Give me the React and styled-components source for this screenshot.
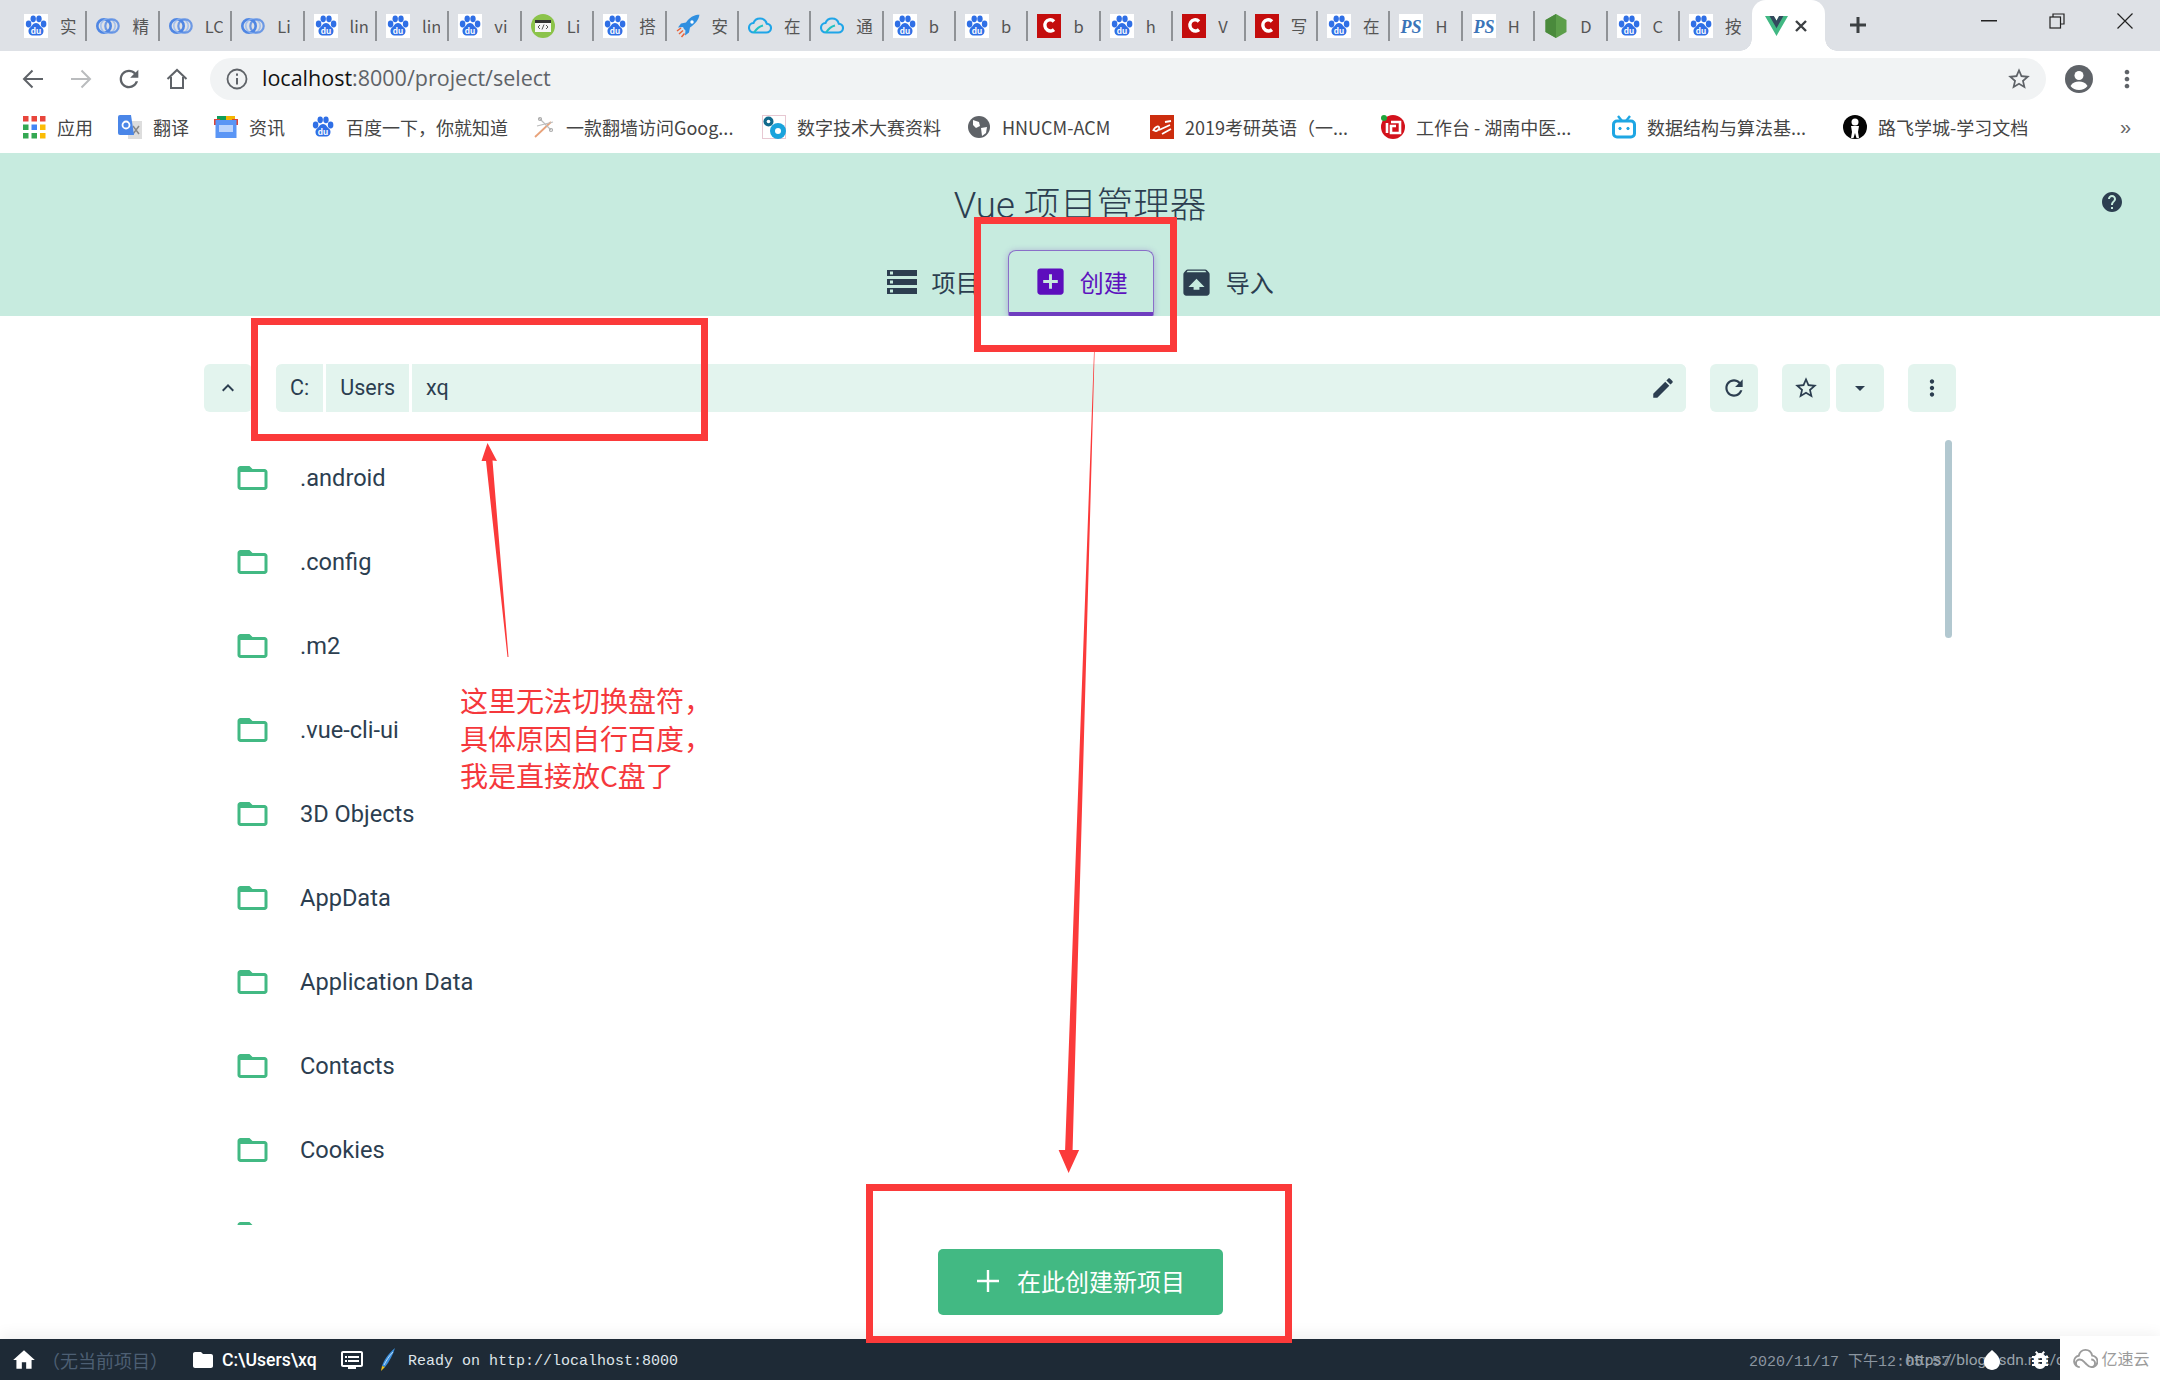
import React from 'react';
import styled, { createGlobalStyle } from 'styled-components';

const Global = createGlobalStyle`
  html, body { margin: 0; padding: 0; background: #fff; overflow: hidden; }
  * { box-sizing: border-box; }
  #root { width: 2160px; height: 1380px; }
`;

const CJK = `"Noto Sans CJK SC", sans-serif`;
const UI = `Roboto, "Noto Sans CJK SC", sans-serif`;

const Page = styled.div`
  position: relative; width: 2160px; height: 1380px; display: flex; flex-direction: column;
  font-family: ${UI}; color: #2c3e50; overflow: hidden;
`;

/* ---------- browser chrome ---------- */
const TabStrip = styled.div`
  height: 51px; background: #dee1e6; display: flex; align-items: stretch; padding-left: 15px; flex: none;
`;
const Tab = styled.div`
  width: 72.4px; flex: none; display: flex; align-items: center; padding-left: 9px; position: relative;
  &::after { content: ''; position: absolute; right: 0; top: 11px; height: 30px; width: 2px; background: ${p => p.$last ? 'transparent' : '#8f9296'}; }
`;
const TabLabel = styled.span`
  margin-left: 12px; width: 18px; overflow: hidden; white-space: nowrap; font: 16.5px ${CJK}; color: #555; line-height: 24px;
`;
const ActiveTab = styled.div`
  width: 73px; flex: none; background: #fff; border-radius: 14px 14px 0 0; display: flex; align-items: center;
  padding-left: 13px; gap: 6px; position: relative;
  &::before, &::after { content: ''; position: absolute; bottom: 0; width: 12px; height: 12px; }
  &::before { left: -12px; background: radial-gradient(circle at 0 0, #dee1e6 11.5px, #fff 12px); }
  &::after { right: -12px; background: radial-gradient(circle at 100% 0, #dee1e6 11.5px, #fff 12px); }
`;
const NewTab = styled.div`
  width: 34px; margin-left: 16px; display: flex; align-items: center; justify-content: center; padding-bottom: 1px;
`;
const WindowControls = styled.div`
  margin-left: auto; display: flex; align-items: flex-start; padding-right: 1px;
`;
const WinBtn = styled.div`
  width: 68px; height: 42px; display: flex; align-items: center; justify-content: center;
`;

const ToolBar = styled.div`
  height: 56px; flex: none; display: flex; align-items: center; background: #fff; padding: 0 0 0 9px;
`;
const NavIcon = styled.div`
  width: 48px; height: 42px; display: flex; align-items: center; justify-content: center; flex: none;
  margin-left: ${p => p.$ml || 0}px;
`;
const UrlPill = styled.div`
  width: 1836px; height: 42px; margin-left: 9px; border-radius: 21px; background: #f1f3f4; display: flex; align-items: center;
  padding: 0 14px 0 15px; flex: none;
`;
const UrlText = styled.div`
  margin-left: 13px; margin-top: -3px; font: 21.5px "Open Sans", sans-serif; color: #5f6368; white-space: nowrap; flex: 1;
  b { font-weight: 400; color: #111; }
`;
const RightTools = styled.div`
  display: flex; align-items: center; margin-left: 19px;
`;

const Bookmarks = styled.div`
  height: 46px; flex: none; background: #fff; display: flex; align-items: center; padding: 0 0 6px 22px; position: relative;
`;
const Bookmark = styled.div`
  display: flex; align-items: center; gap: 11px; margin-right: 26px; flex: none;
`;
const BookmarkText = styled.span`
  font: 18px/24px ${CJK}; color: #454545; white-space: nowrap; width: ${p => p.$w}px;
`;
const More = styled.span`
  margin-left: auto; margin-right: 29px; font: 20px "Liberation Sans", sans-serif; color: #666;
`;

/* ---------- vue ui ---------- */
const Header = styled.header`
  height: 163px; flex: none; background: #c7ebdf; display: flex; flex-direction: column; justify-content: space-between;
`;
const TitleRow = styled.div`
  display: grid; grid-template-columns: 1fr auto 1fr; align-items: center; padding: 27px 36px 0;
`;
const Title = styled.h1`
  grid-column: 2; margin: 0; font: 300 36.5px/52px ${UI}; color: #2c3e50;
`;
const HelpSlot = styled.div`
  grid-column: 3; justify-self: end; display: flex; margin-top: -9px;
`;
const NavTabs = styled.nav`
  display: flex; justify-content: center; height: 66px; padding-right: 2px;
`;
const NavTab = styled.div`
  display: flex; align-items: center; justify-content: center; gap: ${p => p.$gap || 11.5}px; width: ${p => p.$w || 146}px; height: 66px;
  font: 24px/32px ${CJK}; padding-bottom: ${p => p.$active ? 0 : 2}px; color: ${p => p.$active ? '#5d12be' : '#2c3e50'};
  ${p => p.$active && `
    border: 1.5px solid #8a6fc8; border-bottom: 4px solid #6f3ebf; border-radius: 8px 8px 2px 2px;
    box-shadow: 0 1px 6px rgba(110, 40, 190, .35);
  `}
`;

const Main = styled.main`
  flex: 1; min-height: 0; display: flex; flex-direction: column; background: #fff;
`;
const FolderBar = styled.div`
  margin: 48px 204px 0; height: 48px; display: flex; flex: none;
`;
const SquareBtn = styled.div`
  width: 48px; height: 48px; flex: none; border-radius: 6px; background: #e3f4ee; display: flex; align-items: center; justify-content: center;
  margin-left: ${p => p.$ml || 0}px;
`;
const PathBar = styled.div`
  flex: 1; margin-left: 24px; height: 48px; display: flex; border-radius: 6px; overflow: hidden; background: #e3f4ee; align-items: stretch; gap: 3px;
`;
const PathSeg = styled.div`
  display: flex; align-items: center; padding: 0 ${p => p.$px}px 1px; background: #e3f4ee; font: 21.5px ${UI}; color: #2c3e50; box-shadow: 3px 0 0 #fff;
`;
const PathRest = styled.div`
  flex: 1; display: flex; align-items: center; justify-content: space-between; padding: 0 10px 1px 14px; background: #e3f4ee; font: 21.5px ${UI}; color: #2c3e50;
`;

const List = styled.div`
  position: relative; margin-top: 24px; height: 789px; flex: none; overflow: hidden; padding: 0 204px;
`;
const Row = styled.div`
  height: 84px; display: flex; align-items: center; gap: 32px; padding-left: 33px;
  font: 23.6px ${UI}; color: #2c3e50;
`;
const ScrollThumb = styled.div`
  position: absolute; left: 1945px; top: 4px; width: 7px; height: 198px; border-radius: 4px; background: #b2c8d0;
`;

const ActionBar = styled.div`
  flex: 1; display: flex; align-items: center; justify-content: center;
`;
const CreateBtn = styled.div`
  width: 285px; height: 66px; border-radius: 5px; background: #42b983; color: #fff; display: flex; align-items: center; justify-content: center; gap: 18px;
  font: 24px ${CJK}; padding: 0 0 3px 2px;
`;

const StatusBar = styled.footer`
  height: 41px; flex: none; background: #1e2a36; display: flex; align-items: center; padding-left: 11px;
  box-shadow: 0 -6px 14px rgba(0,0,0,.05); position: relative;
`;
const NoProject = styled.span`
  margin-left: 5px; width: 149px; font: 18px ${CJK}; color: #4d5f73; white-space: nowrap;
`;
const CwdText = styled.span`
  margin-left: 7px; width: 118px; font: 500 17.6px ${UI}; color: #fff; white-space: nowrap;
`;
const LogText = styled.span`
  margin-left: 11px; padding-top: 3px; font: 15px "Liberation Mono", monospace; color: #dfe5ea; white-space: nowrap;
`;
const StatusRight = styled.div`
  margin-left: auto; width: 411px; flex: none; position: relative; height: 41px; display: flex; align-items: center;
`;
const Clock = styled.span`
  font: 15px "Liberation Mono", "Noto Sans CJK SC", monospace; color: #8b95a0; white-space: nowrap; width: 157px;
`;
const Watermark = styled.span`
  font: 15.5px ${UI}; color: #9aa3ab; white-space: nowrap;
`;
const StatusGlyph = styled.div`
  position: absolute; top: 9px; left: ${p => p.$x}px; display: flex;
`;
const Corner = styled.div`
  position: absolute; right: 0; bottom: 0; width: 100px; height: 44px; background: #fff; display: flex; align-items: center; justify-content: center; gap: 3px;
  font: 16px ${CJK}; color: #9b9b9b; padding-left: 3px;
`;

/* ---------- annotations over the page ---------- */
const RedBox = styled.div`
  position: absolute; border: 7px solid #fb3a3a; left: ${p => p.$x}px; top: ${p => p.$y}px; width: ${p => p.$w}px; height: ${p => p.$h}px; pointer-events: none;
`;
const Note = styled.div`
  position: absolute; left: 460px; top: 682px; font: 28px/37.5px ${CJK}; color: #f5383c; white-space: nowrap;
`;
const ArrowLayer = styled.svg`
  position: absolute; left: 0; top: 0; pointer-events: none;
`;

/* ---------- icons ---------- */
const Mi = ({ d, size = 24, color = '#2c3e50', vb = '0 0 24 24' }) => (
  <svg width={size} height={size} viewBox={vb} fill={color}><path d={d} /></svg>
);
const P = {
  edit: 'M3 17.25V21h3.75L17.81 9.94l-3.75-3.75L3 17.25zM20.71 7.04c.39-.39.39-1.02 0-1.41l-2.34-2.34c-.39-.39-1.02-.39-1.41 0l-1.83 1.83 3.75 3.75 1.83-1.83z',
  refresh: 'M17.65 6.35C16.2 4.9 14.21 4 12 4c-4.42 0-7.99 3.58-7.99 8s3.57 8 7.99 8c3.73 0 6.84-2.55 7.73-6h-2.08c-.82 2.33-3.04 4-5.65 4-3.31 0-6-2.69-6-6s2.69-6 6-6c1.66 0 3.14.69 4.22 1.78L13 11h7V4l-2.35 2.35z',
  star: 'M22 9.24l-7.19-.62L12 2 9.19 8.63 2 9.24l5.46 4.73L5.82 21 12 17.27 18.18 21l-1.63-7.03L22 9.24zM12 15.4l-3.76 2.27 1-4.28-3.32-2.88 4.38-.38L12 6.1l1.71 4.04 4.38.38-3.32 2.88 1 4.28L12 15.4z',
  dots: 'M12 8c1.1 0 2-.9 2-2s-.9-2-2-2-2 .9-2 2 .9 2 2 2zm0 2c-1.1 0-2 .9-2 2s.9 2 2 2 2-.9 2-2-.9-2-2-2zm0 6c-1.1 0-2 .9-2 2s.9 2 2 2 2-.9 2-2-.9-2-2-2z',
  caret: 'M7 10l5 5 5-5z',
  up: 'M7.41 15.41L12 10.83l4.59 4.58L18 14l-6-6-6 6z',
  help: 'M12 2C6.48 2 2 6.48 2 12s4.48 10 10 10 10-4.48 10-10S17.52 2 12 2zm1 17h-2v-2h2v2zm2.07-7.75l-.9.92C13.45 12.9 13 13.5 13 15h-2v-.5c0-1.1.45-2.1 1.17-2.83l1.24-1.26c.37-.36.59-.86.59-1.41 0-1.1-.9-2-2-2s-2 .9-2 2H8c0-2.21 1.79-4 4-4s4 1.79 4 4c0 .88-.36 1.68-.93 2.25z',
  storage: 'M2 20h20v-4H2v4zm2-3h2v2H4v-2zM2 4v4h20V4H2zm4 3H4V5h2v2zm-4 7h20v-4H2v4zm2-3h2v2H4v-2z',
  addBox: 'M19 3H5c-1.11 0-2 .9-2 2v14c0 1.1.89 2 2 2h14c1.1 0 2-.9 2-2V5c0-1.1-.9-2-2-2zm-2 10h-4v4h-2v-4H7v-2h4V7h2v4h4v2z',
  unarchive: 'M20.55 5.22l-1.39-1.68C18.88 3.21 18.47 3 18 3H6c-.47 0-.88.21-1.15.55L3.46 5.22C3.17 5.57 3 6.01 3 6.5V19c0 1.1.89 2 2 2h14c1.1 0 2-.9 2-2V6.5c0-.49-.17-.93-.45-1.28zM12 9.5l5.5 5.5H14v2h-4v-2H6.5L12 9.5zM5.12 5l.82-1h12l.93 1H5.12z',
  home: 'M10 20v-6h4v6h5v-8h3L12 3 2 12h3v8z',
  folder: 'M10 4H4c-1.1 0-1.99.9-1.99 2L2 18c0 1.1.9 2 2 2h16c1.1 0 2-.9 2-2V8c0-1.1-.9-2-2-2h-8l-2-2z',
  folderOpen: 'M20 6h-8l-2-2H4c-1.1 0-1.99.9-1.99 2L2 18c0 1.1.9 2 2 2h16c1.1 0 2-.9 2-2V8c0-1.1-.9-2-2-2zm0 12H4V8h16v10z',
  dvr: 'M21 3H3c-1.1 0-2 .9-2 2v12c0 1.1.9 2 2 2h5v2h8v-2h5c1.1 0 1.99-.9 1.99-2L23 5c0-1.1-.9-2-2-2zm0 14H3V5h18v12zm-2-9H8v2h11V8zm0 4H8v2h11v-2zM7 8H5v2h2V8zm0 4H5v2h2v-2z',
  bug: 'M20 8h-2.81c-.45-.78-1.07-1.45-1.82-1.96L17 4.41 15.59 3l-2.17 2.17C12.96 5.06 12.49 5 12 5s-.96.06-1.41.17L8.41 3 7 4.41l1.62 1.63C7.88 6.55 7.26 7.22 6.81 8H4v2h2.09c-.05.33-.09.66-.09 1v1H4v2h2v1c0 .34.04.67.09 1H4v2h2.81c1.04 1.79 2.97 3 5.19 3s4.15-1.21 5.19-3H20v-2h-2.09c.05-.33.09-.66.09-1v-1h2v-2h-2v-1c0-.34-.04-.67-.09-1H20V8zm-6 8h-4v-2h4v2zm0-4h-4v-2h4v2z',
  drop: 'M12 2c-5.33 4.55-8 8.48-8 11.8 0 4.98 3.8 8.2 8 8.2s8-3.22 8-8.2c0-3.32-2.67-7.25-8-11.8z',
};

const Baidu = ({ size = 24, bg = '#fff' }) => (
  <svg width={size} height={size} viewBox="0 0 24 24">
    <rect width="24" height="24" fill={bg} />
    <g fill="#2f6fe6">
      <ellipse cx="4.6" cy="10" rx="2.8" ry="3.4" />
      <ellipse cx="9.2" cy="4.8" rx="2.7" ry="3.4" />
      <ellipse cx="15" cy="4.8" rx="2.7" ry="3.4" />
      <ellipse cx="19.6" cy="10" rx="2.8" ry="3.4" />
      <path d="M12 9c3 0 4 3.200 6.400 5 2.200 2 1.100 7.500-2.700 7.500H8.300C4.500 21.500 3.400 16 5.600 14c2.400-1.800 3.400-5 6.400-5z" />
    </g>
    <text x="12" y="20" textAnchor="middle" fontSize="8.500" fontWeight="700" fontFamily="Liberation Sans" fill="#fff">du</text>
  </svg>
);
const Swirl = () => (
  <svg width="24" height="24" viewBox="0 0 24 24" fill="none" stroke="#4f86e3">
    <circle cx="8" cy="12" r="6.700" strokeWidth="2.600" />
    <circle cx="12" cy="12" r="7.200" strokeWidth="1.600" opacity=".75" stroke="#8fb4ef" />
    <circle cx="16" cy="12" r="6.700" strokeWidth="2.200" opacity=".8" />
  </svg>
);
const CodeBadge = () => (
  <svg width="24" height="24" viewBox="0 0 24 24">
    <circle cx="12" cy="12" r="12" fill="#8bc34a" />
    <rect x="4" y="6" width="16" height="12" fill="#f5f5f5" />
    <rect x="4" y="6" width="16" height="3" fill="#333" />
    <path d="M9 11l-2 2 2 2M15 11l2 2-2 2M13 10.500l-2 5" fill="none" stroke="#444" strokeWidth=".9" />
  </svg>
);
const Rocket = () => (
  <svg width="24" height="24" viewBox="0 0 24 24">
    <path d="M23.500 0.500c-6 .5-10 3-13.500 8l-5 1-3 4 5-.5 1 2 1.500 1.500-.5 5 4-3 1-5c5-3.500 9-7.500 9.500-13.500z" fill="#2f8fe0" />
    <circle cx="16" cy="8" r="1.700" fill="#fff" />
    <path d="M1 17l4-3M3 20l4-3.500M5.500 23l3-3.500" stroke="#e8623a" strokeWidth="1.500" />
  </svg>
);
const Cloud = () => (
  <svg width="24" height="24" viewBox="0 0 24 24" fill="none" strokeWidth="2.100">
    <path d="M6 18.500c-3 0-5-2-5-4.800 0-2.500 2-4.500 4.500-4.700C6.500 6 9 4.500 12 4.500c3.500 0 6 2.200 6.800 5.200 2.400.3 4.200 2 4.200 4.300 0 2.600-2 4.500-4.800 4.500H6z" stroke="#1fa5e8" />
    <path d="M6 18.500c2-3 5-6 9-7" stroke="#22c1c3" />
  </svg>
);
const CLogo = () => (
  <svg width="24" height="24" viewBox="0 0 24 24">
    <rect width="24" height="24" fill="#c40d0d" />
    <path d="M17 7.500c-1.200-1.300-3-2-4.800-1.600-3 .6-4.700 3.300-4.200 6.300.5 3.300 3.600 5.300 6.600 4.600.9-.2 1.700-.6 2.400-1.200" fill="none" stroke="#fff" strokeWidth="3.400" />
  </svg>
);
const PS = () => (
  <svg width="24" height="24" viewBox="0 0 24 24">
    <rect width="24" height="24" fill="#fff" />
    <text x="12" y="18.500" textAnchor="middle" fontSize="18" fontStyle="italic" fontWeight="700" fontFamily="Liberation Serif" fill="#3a74b8">PS</text>
  </svg>
);
const NodeHex = () => (
  <svg width="24" height="24" viewBox="0 0 24 24">
    <path d="M12 0l10.500 6v12L12 24 1.500 18V6z" fill="#5c9e4a" />
    <path d="M12 0v24L1.500 18V6z" fill="#4a8a3c" />
  </svg>
);
const VueLogo = () => (
  <svg width="23" height="20" viewBox="0 0 256 221">
    <path d="M204.800 0H256L128 220.800 0 0h97.920L128 51.200 157.440 0z" fill="#41b883" />
    <path d="M50 0l78 134.400L205 0h-47.500L128 51.200 97.900 0z" fill="#34495e" />
  </svg>
);
const Apps = () => (
  <svg width="24" height="24" viewBox="0 0 24 24">
    {[['#e8453c', '#e8453c', '#e8453c'], ['#34a853', '#4285f4', '#fbbc05'], ['#34a853', '#34a853', '#fbbc05']].flatMap((r, y) =>
      r.map((c, x) => <rect key={`${x}${y}`} x={1 + x * 8.500} y={1 + y * 8.500} width="5.500" height="5.500" fill={c} />))}
  </svg>
);
const Translate = () => (
  <svg width="24" height="24" viewBox="0 0 24 24">
    <rect x="10" y="6" width="14" height="18" fill="#ddd" />
    <path d="M15 11l6 8M21 11l-6 8" stroke="#888" strokeWidth="1.500" />
    <path d="M2 0h11l3 20H2a2 2 0 0 1-2-2V2a2 2 0 0 1 2-2z" fill="#4a86e8" />
    <circle cx="8" cy="10" r="3.500" fill="none" stroke="#fff" strokeWidth="1.800" />
  </svg>
);
const News = () => (
  <svg width="24" height="24" viewBox="0 0 24 24">
    <path d="M3 1h18v5H3z" fill="#f4b400" />
    <path d="M3 1h9v5H3z" fill="#0f9d58" />
    <path d="M0 4h6v6H0zM18 4h6v6h-6z" fill="#db4437" />
    <rect x="1.500" y="5" width="21" height="18" fill="#5a95f5" />
    <rect x="5" y="10" width="14" height="7" fill="#dbe8fd" opacity=".75" />
  </svg>
);
const Dragonfly = () => (
  <svg width="24" height="24" viewBox="0 0 24 24" fill="none" strokeWidth="1.200">
    <path d="M4 22L20 7" stroke="#e8a27a" strokeWidth="1.800" />
    <path d="M8 3l12 12M6 11l16-4" stroke="#bcbcbc" />
    <circle cx="9" cy="4" r="1.500" stroke="#aaa" /><circle cx="20" cy="15" r="1.500" stroke="#aaa" />
  </svg>
);
const Gears = () => (
  <svg width="24" height="24" viewBox="0 0 24 24">
    <rect x=".5" y=".5" width="23" height="23" fill="#fff" stroke="#e7c8d2" />
    <circle cx="6.500" cy="6.500" r="5" fill="#126a8c" /><circle cx="6.500" cy="6.500" r="1.800" fill="#fff" />
    <circle cx="16" cy="16" r="8" fill="#1aa3dc" /><circle cx="16" cy="16" r="3" fill="#fff" />
  </svg>
);
const Globe = () => (
  <svg width="24" height="24" viewBox="0 0 24 24">
    <circle cx="12" cy="12" r="11" fill="#5f6368" />
    <path d="M6 5l6 2 1 4-4 2-3-3zM14 13l6-1-1 6-4 3z" fill="#fff" />
  </svg>
);
const Kaoyan = () => (
  <svg width="24" height="24" viewBox="0 0 24 24">
    <rect width="24" height="24" fill="#cc2d0e" />
    <path d="M3 16c2-5 7-6 6-2.500-1 3-5 3.500-4.500 1M9 15l11-5M12 19l9-5M15 7l6-1" fill="none" stroke="#fff" strokeWidth="1.800" />
  </svg>
);
const IG = () => (
  <svg width="24" height="24" viewBox="0 0 24 24">
    <circle cx="12" cy="12" r="12" fill="#d3121c" />
    <path d="M10 7h9v11h-9v-7h5" fill="none" stroke="#fff" strokeWidth="2.600" />
    <path d="M6 8v10" stroke="#fff" strokeWidth="2.600" />
    <circle cx="3" cy="3" r="3" fill="#1fa53a" />
  </svg>
);
const Bili = () => (
  <svg width="24" height="24" viewBox="0 0 24 24" fill="none" stroke="#1ea6e3">
    <rect x="1.500" y="6" width="21" height="16" rx="3.500" strokeWidth="3" />
    <path d="M6 1l4 5M18 1l-4 5" strokeWidth="2.400" />
    <circle cx="8" cy="13.500" r="1.200" fill="#1ea6e3" /><circle cx="16" cy="13.500" r="1.200" fill="#1ea6e3" />
  </svg>
);
const Figure = () => (
  <svg width="24" height="24" viewBox="0 0 24 24">
    <circle cx="12" cy="12" r="12" fill="#050505" />
    <circle cx="12" cy="7" r="3.500" fill="#fff" />
    <path d="M8 11h8l-1 6 1 6h-2.500L12 18l-1.500 5H8l1-6z" fill="#fff" />
  </svg>
);
const Pen = () => (
  <svg width="18" height="26" viewBox="0 0 18 26">
    <path d="M16 1C9 7 5 13 3 19l3 1C10 15 14 8 16 1z" fill="#3b8fdc" />
    <path d="M3 19l-1 5 4-4z" fill="#f0c419" />
    <path d="M14 5C10 9 7 14 5 18" stroke="#d9ecfb" strokeWidth=".8" fill="none" />
  </svg>
);
const CloudMark = () => (
  <svg width="25" height="21" viewBox="0 0 26 22" fill="none" stroke="#9b9b9b" strokeWidth="2">
    <path d="M7 20a6 6 0 0 1-1-11.900C7 4 10 2 13 2s6 2 7 6a6 6 0 0 1-1 12c-3 0-4-2-6-4s-3-4-6-4a4 4 0 0 0 0 8z" />
    <path d="M19 12a4 4 0 0 1 0 8" />
  </svg>
);

const B = <Baidu />;
const tabs = [
  [B, '实'], [<Swirl />, '精'], [<Swirl />, 'LC'], [<Swirl />, 'Li'], [B, 'lin'], [B, 'lin'], [B, 'vi'], [<CodeBadge />, 'Li'],
  [B, '搭'], [<Rocket />, '安'], [<Cloud />, '在'], [<Cloud />, '通'], [B, 'b'], [B, 'b'], [<CLogo />, 'b'], [B, 'h'],
  [<CLogo />, 'V'], [<CLogo />, '写'], [B, '在'], [<PS />, 'H'], [<PS />, 'H'], [<NodeHex />, 'D'], [B, 'C'], [B, '按'],
];
const bookmarks = [
  [<Apps />, '应用', 35], [<Translate />, '翻译', 35], [<News />, '资讯', 36], [<Baidu />, '百度一下，你就知道', 159],
  [<Dragonfly />, '一款翻墙访问Goog...', 170], [<Gears />, '数字技术大赛资料', 144], [<Globe />, 'HNUCM-ACM', 122],
  [<Kaoyan />, '2019考研英语（一...', 170], [<IG />, '工作台 - 湖南中医...', 170], [<Bili />, '数据结构与算法基...', 170], [<Figure />, '路飞学城-学习文档', 152],
];
const folders = ['.android', '.config', '.m2', '.vue-cli-ui', '3D Objects', 'AppData', 'Application Data', 'Contacts', 'Cookies', ''];

const NavSpacer = styled.span`
  width: 15px; flex: none;
`;

export default function App() {
  return (
    <Page>
      <Global />
      <TabStrip>
        {tabs.map(([icon, label], i) => (
          <Tab key={i} $last={i === tabs.length - 1}>{icon}<TabLabel>{label}</TabLabel></Tab>
        ))}
        <ActiveTab>
          <VueLogo />
          <svg width="14" height="14" viewBox="0 0 14 14" stroke="#3c4043" strokeWidth="2.400"><path d="M2 2l10 10M12 2L2 12" /></svg>
        </ActiveTab>
        <NewTab>
          <svg width="20" height="20" viewBox="0 0 20 20" stroke="#3c4043" strokeWidth="3"><path d="M10 2v16M2 10h16" /></svg>
        </NewTab>
        <WindowControls>
          <WinBtn><svg width="16" height="2"><rect width="16" height="1.500" fill="#222" /></svg></WinBtn>
          <WinBtn>
            <svg width="16" height="16" viewBox="0 0 16 16" fill="none" stroke="#222" strokeWidth="1.200">
              <rect x="1" y="4" width="10.500" height="11" /><path d="M4 4V1h11v10h-3.500" />
            </svg>
          </WinBtn>
          <WinBtn>
            <svg width="16" height="16" viewBox="0 0 16 16" stroke="#222" strokeWidth="1.200"><path d="M.5.5l15 15M15.500.5l-15 15" /></svg>
          </WinBtn>
        </WindowControls>
      </TabStrip>

      <ToolBar>
        <NavIcon>
          <svg width="22" height="22" viewBox="0 0 22 22" fill="none" stroke="#5f6368" strokeWidth="2"><path d="M21 11H2M10.500 2.500L2 11l8.500 8.500" /></svg>
        </NavIcon>
        <NavIcon>
          <svg width="22" height="22" viewBox="0 0 22 22" fill="none" stroke="#babcbe" strokeWidth="2"><path d="M1 11h19M11.500 2.500L20 11l-8.500 8.500" /></svg>
        </NavIcon>
        <NavIcon><Mi d={P.refresh} size={28} color="#5f6368" /></NavIcon>
        <NavIcon>
          <svg width="22" height="22" viewBox="0 0 22 22" fill="none" stroke="#5f6368" strokeWidth="2"><path d="M1.500 11L11 2l9.500 9M5 9v11h12V9" /></svg>
        </NavIcon>
        <UrlPill>
          <svg width="24" height="24" viewBox="0 0 24 24" fill="none" stroke="#5f6368" strokeWidth="1.800">
            <circle cx="12" cy="12" r="9.500" /><path d="M12 11v6.500M12 6.500v2.200" strokeWidth="2" />
          </svg>
          <UrlText><b>localhost</b>:8000/project/select</UrlText>
          <Mi d={P.star} size={26} color="#5f6368" />
        </UrlPill>
        <RightTools>
          <svg width="28" height="28" viewBox="0 0 28 28">
            <circle cx="14" cy="14" r="14" fill="#5f6368" />
            <circle cx="14" cy="10.500" r="4.500" fill="#fff" />
            <path d="M5.500 21c2-3.500 5-4.500 8.500-4.500s6.500 1 8.500 4.500c-2 2.500-5 4-8.500 4s-6.500-1.500-8.500-4z" fill="#fff" />
          </svg>
          <NavIcon $ml={10}><Mi d={P.dots} size={28} color="#5f6368" /></NavIcon>
        </RightTools>
      </ToolBar>

      <Bookmarks>
        {bookmarks.map(([icon, text, w], i) => (
          <Bookmark key={i}>{icon}<BookmarkText $w={w}>{text}</BookmarkText></Bookmark>
        ))}
        <More>»</More>
      </Bookmarks>

      <Header>
        <TitleRow>
          <Title>Vue 项目管理器</Title>
          <HelpSlot><Mi d={P.help} size={24} /></HelpSlot>
        </TitleRow>
        <NavTabs>
          <NavTab $w={149} $gap={15}><Mi d={P.storage} size={30} vb="2 2 20 20" /><span>项目</span></NavTab>
          <NavTab $active><Mi d={P.addBox} size={35} color="#5d0ebd" /><span>创建</span></NavTab>
          <NavTab><Mi d={P.unarchive} size={35} /><span>导入</span></NavTab>
        </NavTabs>
      </Header>

      <Main>
        <FolderBar>
          <SquareBtn><Mi d={P.up} size={24} /></SquareBtn>
          <PathBar>
            <PathSeg $px={14}>C:</PathSeg>
            <PathSeg $px={14}>Users</PathSeg>
            <PathRest>
              <span>xq</span>
              <Mi d={P.edit} size={26} />
            </PathRest>
          </PathBar>
          <SquareBtn $ml={24}><Mi d={P.refresh} size={26} /></SquareBtn>
          <SquareBtn $ml={24}><Mi d={P.star} size={26} /></SquareBtn>
          <SquareBtn $ml={6}><Mi d={P.caret} size={24} /></SquareBtn>
          <SquareBtn $ml={24}><Mi d={P.dots} size={26} /></SquareBtn>
        </FolderBar>

        <List>
          {folders.map((f, i) => (
            <Row key={i}>
              <svg width="31" height="24" viewBox="2 4 20 16" fill="#42b983"><path d={P.folderOpen} /></svg>
              {f && <span>{f}</span>}
            </Row>
          ))}
          <ScrollThumb />
        </List>

        <ActionBar>
          <CreateBtn>
            <svg width="22" height="22" viewBox="0 0 22 22" stroke="#fff" strokeWidth="2.400"><path d="M11 0v22M0 11h22" /></svg>
            <span>在此创建新项目</span>
          </CreateBtn>
        </ActionBar>
      </Main>

      <StatusBar>
        <Mi d={P.home} size={26} color="#fff" />
        <NoProject>（无当前项目）</NoProject>
        <Mi d={P.folder} size={24} color="#fff" />
        <CwdText>C:\Users\xq</CwdText>
        <Mi d={P.dvr} size={24} color="#fff" />
        <NavSpacer />
        <Pen />
        <LogText>Ready on http://localhost:8000</LogText>
        <StatusRight>
          <Clock>2020/11/17 下午12:05:57</Clock>
          <Watermark>https://blog.csdn.net/q</Watermark>
          <StatusGlyph $x={231}><Mi d={P.drop} size={24} color="#fff" /></StatusGlyph>
          <StatusGlyph $x={279}><Mi d={P.bug} size={24} color="#fff" /></StatusGlyph>
        </StatusRight>
        <Corner><CloudMark /><span>亿速云</span></Corner>
      </StatusBar>

      <RedBox $x={251} $y={318} $w={457} $h={123} />
      <RedBox $x={974} $y={217} $w={203} $h={135} />
      <RedBox $x={866} $y={1184} $w={426} $h={159} />
      <Note>这里无法切换盘符，<br />具体原因自行百度，<br />我是直接放C盘了</Note>
      <ArrowLayer width="2160" height="1380" viewBox="0 0 2160 1380">
        <path d="M487.500 443L497 461l-4.500-.5L508.500 657h-1L486 461h-4.500z" fill="#fb3a3a" />
        <path d="M1094 352h.6l-22 798h6.500l-10.500 23-10-23h6.500z" fill="#fb3a3a" />
      </ArrowLayer>
    </Page>
  );
}
